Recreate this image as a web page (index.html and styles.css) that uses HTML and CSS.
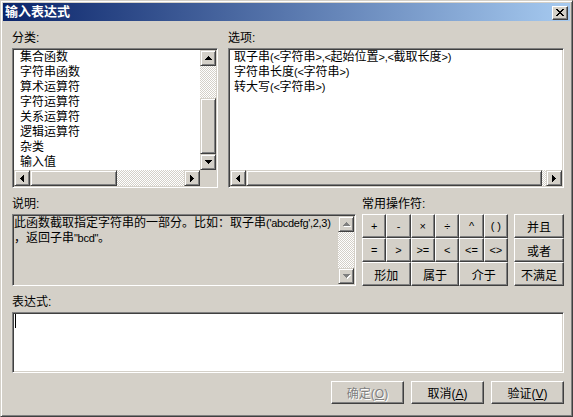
FILE: index.html
```html
<!DOCTYPE html>
<html lang="zh-CN">
<head>
    <meta charset="UTF-8">
    <title>输入表达式</title>
    <link rel="stylesheet" href="styles.css">
</head>
<body>
    <svg class="defs" width="0" height="0">
        <symbol id="arr-up" viewBox="0 0 7 4"><path d="M3 0h1v1H3zM2 1h3v1H2zM1 2h5v1H1zM0 3h7v1H0z"/></symbol>
        <symbol id="arr-down" viewBox="0 0 7 4"><path d="M0 0h7v1H0zM1 1h5v1H1zM2 2h3v1H2zM3 3h1v1H3z"/></symbol>
        <symbol id="arr-left" viewBox="0 0 4 7"><path d="M0 3h1v1H0zM1 2h1v3H1zM2 1h1v5H2zM3 0h1v7H3z"/></symbol>
        <symbol id="arr-right" viewBox="0 0 4 7"><path d="M0 0h1v7H0zM1 1h1v5H1zM2 2h1v3H2zM3 3h1v1H3z"/></symbol>
    </svg>

    <div class="window">
        <div class="titlebar">
            <span class="title">输入表达式</span>
            <button class="close-btn">
                <svg width="8" height="7" viewBox="0 0 8 7"><path d="M0 0h2v1H0zM6 0h2v1H6zM1 1h2v1H1zM5 1h2v1H5zM2 2h4v1H2zM3 3h2v1H3zM2 4h4v1H2zM1 5h2v1H1zM5 5h2v1H5zM0 6h2v1H0zM6 6h2v1H6z"/></svg>
            </button>
        </div>

        <div class="dialog-body">
            <div class="top-row">
                <div class="group category">
                    <div class="label">分类:</div>
                    <div class="listbox with-vscroll">
                        <ul class="items">
                            <li>集合函数</li>
                            <li>字符串函数</li>
                            <li>算术运算符</li>
                            <li>字符运算符</li>
                            <li>关系运算符</li>
                            <li>逻辑运算符</li>
                            <li>杂类</li>
                            <li>输入值</li>
                        </ul>
                        <div class="vscroll">
                            <div class="sb-btn"><svg width="7" height="4"><use href="#arr-up"/></svg></div>
                            <div class="track"></div>
                            <div class="thumb v-thumb"></div>
                            <div class="sb-btn"><svg width="7" height="4"><use href="#arr-down"/></svg></div>
                        </div>
                        <div class="hscroll">
                            <div class="sb-btn"><svg width="4" height="7"><use href="#arr-left"/></svg></div>
                            <div class="thumb cat-hthumb"></div>
                            <div class="track"></div>
                            <div class="sb-btn"><svg width="4" height="7"><use href="#arr-right"/></svg></div>
                        </div>
                        <div class="corner"></div>
                    </div>
                </div>

                <div class="group options">
                    <div class="label">选项:</div>
                    <div class="listbox">
                        <ul class="items">
                            <li>取子串<span class="latin">(&lt;</span>字符串<span class="latin">&gt;,&lt;</span>起始位置<span class="latin">&gt;,&lt;</span>截取长度<span class="latin">&gt;)</span></li>
                            <li>字符串长度<span class="latin">(&lt;</span>字符串<span class="latin">&gt;)</span></li>
                            <li>转大写<span class="latin">(&lt;</span>字符串<span class="latin">&gt;)</span></li>
                        </ul>
                        <div class="hscroll">
                            <div class="sb-btn"><svg width="4" height="7"><use href="#arr-left"/></svg></div>
                            <div class="thumb opt-hthumb"></div>
                            <div class="track"></div>
                            <div class="sb-btn"><svg width="4" height="7"><use href="#arr-right"/></svg></div>
                        </div>
                    </div>
                </div>
            </div>

            <div class="mid-row">
                <div class="group description">
                    <div class="label">说明:</div>
                    <div class="desc-box">
                        <div class="desc-text">此函数截取指定字符串的一部分。比如：取子串<span class="latin">('abcdefg',2,3)</span><br>，返回子串<span class="latin">"bcd"</span>。</div>
                        <div class="vscroll disabled">
                            <div class="sb-btn"><svg width="7" height="4"><use href="#arr-up"/></svg></div>
                            <div class="track"></div>
                            <div class="sb-btn"><svg width="7" height="4"><use href="#arr-down"/></svg></div>
                        </div>
                    </div>
                </div>

                <div class="group operators">
                    <div class="label">常用操作符:</div>
                    <div class="op-grid">
                        <button class="btn op">+</button>
                        <button class="btn op">-</button>
                        <button class="btn op">×</button>
                        <button class="btn op">÷</button>
                        <button class="btn op">^</button>
                        <button class="btn op">( )</button>
                        <button class="btn op">=</button>
                        <button class="btn op">&gt;</button>
                        <button class="btn op">&gt;=</button>
                        <button class="btn op">&lt;</button>
                        <button class="btn op">&lt;=</button>
                        <button class="btn op">&lt;&gt;</button>
                        <button class="btn op wide">形加</button>
                        <button class="btn op wide">属于</button>
                        <button class="btn op wide">介于</button>
                    </div>
                </div>

                <div class="logic-col">
                    <button class="btn">并且</button>
                    <button class="btn">或者</button>
                    <button class="btn">不满足</button>
                </div>
            </div>

            <div class="group expression">
                <div class="label">表达式:</div>
                <div class="expr-box"><span class="caret"></span></div>
            </div>

            <div class="footer">
                <button class="btn action" disabled>确定(<u>O</u>)</button>
                <button class="btn action">取消(<u>A</u>)</button>
                <button class="btn action">验证(<u>V</u>)</button>
            </div>
        </div>
    </div>
</body>
</html>
```

FILE: styles.css
```css
* {
    box-sizing: border-box;
}
body {
    margin: 0;
    background-color: #d4d0c8;
    font-family: "Liberation Sans", "Noto Sans CJK SC", sans-serif;
    font-size: 12px;
    color: #000;
}
.defs {
    position: absolute;
}
.latin {
    font-size: 11px;
    letter-spacing: -0.3px;
}
.window {
    width: 573px;
    height: 417px;
    padding: 2px;
    background-color: #d4d0c8;
    border: 1px solid;
    border-color: #d4d0c8 #404040 #404040 #d4d0c8;
    box-shadow: inset 1px 1px #fff, inset -1px -1px #808080;
    display: flex;
    flex-direction: column;
}
.titlebar {
    height: 18px;
    background: linear-gradient(90deg, #0a246a 0%, #a6caf0 100%);
    display: flex;
    align-items: center;
    justify-content: space-between;
    padding: 0 2px 0 2px;
}
.title {
    color: #fff;
    font-weight: bold;
    font-size: 13px;
    line-height: 14px;
}
.close-btn {
    width: 16px;
    height: 14px;
    padding: 0;
    margin-top: 1px;
    background-color: #d4d0c8;
    border: 1px solid;
    border-color: #fff #404040 #404040 #fff;
    box-shadow: inset -1px -1px #808080;
    display: flex;
    align-items: center;
    justify-content: center;
}
.dialog-body {
    flex: 1;
    padding: 10px 6px 0 9px;
    display: flex;
    flex-direction: column;
}
.label {
    height: 14px;
    line-height: 14px;
    margin-bottom: 3px;
    white-space: nowrap;
}

/* list boxes */
.top-row {
    display: flex;
    gap: 10px;
}
.category {
    width: 206px;
}
.options {
    flex: 1;
}
.listbox {
    height: 140px;
    background-color: #fff;
    border: 1px solid;
    border-color: #808080 #fff #fff #808080;
    box-shadow: inset 1px 1px #404040, inset -1px -1px #d4d0c8;
    padding: 1px;
    display: grid;
    grid-template-columns: 1fr;
    grid-template-rows: 1fr 16px;
}
.listbox.with-vscroll {
    grid-template-columns: 1fr 16px;
}
.items {
    list-style: none;
    margin: 0;
    padding: 0 0 0 4px;
    overflow: hidden;
}
.category .items {
    padding-left: 6px;
}
.items li {
    height: 15px;
    line-height: 15px;
    white-space: nowrap;
}

/* scrollbars */
.vscroll {
    display: flex;
    flex-direction: column;
}
.hscroll {
    display: flex;
}
.track {
    flex: 1;
    background-color: #d4d0c8;
    background-image: repeating-conic-gradient(#fff 0 25%, #d4d0c8 0 50%);
    background-size: 2px 2px;
}
.sb-btn, .thumb {
    background-color: #d4d0c8;
    border: 1px solid;
    border-color: #d4d0c8 #404040 #404040 #d4d0c8;
    box-shadow: inset 1px 1px #fff, inset -1px -1px #808080;
}
.sb-btn {
    width: 16px;
    height: 16px;
    flex: none;
    display: flex;
    align-items: center;
    justify-content: center;
}
.sb-btn svg {
    display: block;
}
.v-thumb {
    height: 56px;
}
.category .vscroll .track {
    flex: none;
    height: 32px;
}
.cat-hthumb {
    width: 87px;
}
.opt-hthumb {
    width: 296px;
}
.corner {
    background-color: #d4d0c8;
}
.vscroll.disabled svg {
    fill: #808080;
    filter: drop-shadow(1px 1px 0 #fff);
}

/* description and operators */
.mid-row {
    display: flex;
    gap: 6px;
    margin-top: 9px;
}
.description {
    width: 344px;
}
.desc-box {
    height: 72px;
    border: 1px solid;
    border-color: #808080 #fff #fff #808080;
    box-shadow: inset 1px 1px #404040, inset -1px -1px #d4d0c8;
    padding: 1px;
    display: flex;
}
.desc-text {
    flex: 1;
    line-height: 15px;
    white-space: nowrap;
    overflow: hidden;
}
.desc-box .vscroll {
    width: 16px;
}
.operators {
    width: 146px;
}
.op-grid {
    display: grid;
    grid-template-columns: repeat(6, 1fr);
    grid-auto-rows: 24px;
}
.btn {
    font-family: inherit;
    font-size: 12px;
    color: #000;
    background-color: #d4d0c8;
    border: 1px solid;
    border-color: #fff #404040 #404040 #fff;
    box-shadow: inset -1px -1px #808080;
    padding: 0;
    margin: 0;
}
.op {
    font-size: 11px;
}
.op.wide {
    grid-column: span 2;
    font-size: 12px;
}
.logic-col {
    width: 50px;
    margin-top: 17px;
    display: grid;
    grid-auto-rows: 24px;
}

/* expression */
.expression {
    margin-top: 9px;
}
.expr-box {
    height: 61px;
    background-color: #fff;
    border: 1px solid;
    border-color: #808080 #fff #fff #808080;
    box-shadow: inset 1px 1px #404040, inset -1px -1px #d4d0c8;
    padding: 1px 0 0 2px;
}
.caret {
    display: block;
    width: 1px;
    height: 14px;
    background-color: #000;
}
.footer {
    display: flex;
    justify-content: flex-end;
    gap: 7px;
    margin-top: 8px;
}
.action {
    width: 73px;
    height: 23px;
}
.action u {
    text-underline-offset: 1px;
}
.btn:disabled {
    color: #808080;
    text-shadow: 1px 1px 0 #fff;
}
```
